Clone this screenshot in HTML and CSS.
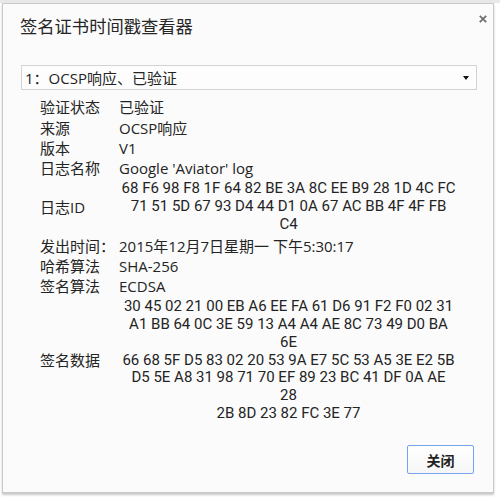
FILE: index.html
```html
<!DOCTYPE html>
<html lang="zh-CN">
<head>
<meta charset="utf-8">
<title>签名证书时间戳查看器</title>
<link rel="stylesheet" href="styles.css">
</head>
<body>
<div class="dialog">
  <div class="titlebar">
    <h1 class="title">签名证书时间戳查看器</h1>
    <span class="close" aria-label="关闭">
      <svg width="8" height="8" viewBox="0 0 8 8"><path d="M0.8 0.8 L7.2 7.2 M7.2 0.8 L0.8 7.2" stroke="#6f6f6f" stroke-width="1.8" fill="none"/></svg>
    </span>
  </div>
  <div class="select">
    <span class="select-text">1<span class="colon">：</span>OCSP响应、已验证</span>
    <span class="arrow"></span>
  </div>
  <div class="details">
    <div class="label">验证状态</div><div class="value">已验证</div>
    <div class="label">来源</div><div class="value">OCSP响应</div>
    <div class="label">版本</div><div class="value">V1</div>
    <div class="label">日志名称</div><div class="value">Google 'Aviator' log</div>
    <div class="label mid">日志ID</div>
    <div class="value hex">
      <div>68 F6 98 F8 1F 64 82 BE 3A 8C EE B9 28 1D 4C FC</div>
      <div>71 51 5D 67 93 D4 44 D1 0A 67 AC BB 4F 4F FB</div>
      <div>C4</div>
    </div>
    <div class="label">发出时间<span class="colon">：</span></div><div class="value">2015年12月7日星期一 下午5:30:17</div>
    <div class="label">哈希算法</div><div class="value">SHA-256</div>
    <div class="label">签名算法</div><div class="value">ECDSA</div>
    <div class="label"></div>
    <div class="value hex sighex">
      <div>30 45 02 21 00 EB A6 EE FA 61 D6 91 F2 F0 02 31</div>
      <div>A1 BB 64 0C 3E 59 13 A4 A4 AE 8C 73 49 D0 BA</div>
      <div>6E</div>
    </div>
    <div class="label top">签名数据</div>
    <div class="value hex sigdata">
      <div>66 68 5F D5 83 02 20 53 9A E7 5C 53 A5 3E E2 5B</div>
      <div>D5 5E A8 31 98 71 70 EF 89 23 BC 41 DF 0A AE</div>
      <div>28</div>
      <div>2B 8D 23 82 FC 3E 77</div>
    </div>
  </div>
  <div class="footer">
    <button class="btn">关闭</button>
  </div>
</div>
</body>
</html>
```
FILE: styles.css
```css
html, body {
  margin: 0;
  padding: 0;
}
body {
  background: linear-gradient(#e8e8e8, #e8e8e8) top left / 100% 3px no-repeat, #ffffff;
  padding: 3px 0 0 2px;
  font-family: "Open Sans", "Noto Sans CJK SC", sans-serif;
  font-size: 15px;
  color: #242424;
  width: 500px;
  height: 499px;
  box-sizing: border-box;
}
.dialog {
  width: 492px;
  height: 490px;
  box-sizing: border-box;
  border: 1px solid #c9c9c9;
  background: #fbfbfb;
  box-shadow: 0 2px 2px rgba(0, 0, 0, 0.22);
  display: flex;
  flex-direction: column;
}
.titlebar {
  display: flex;
  justify-content: space-between;
  align-items: flex-start;
}
.title {
  margin: 10px 0 0 17px;
  font-size: 17.3px;
  line-height: 24px;
  font-weight: normal;
  color: #262626;
  font-family: "Noto Sans CJK SC", sans-serif;
}
.close {
  display: block;
  width: 8px;
  height: 8px;
  margin: 11px 6px 0 0;
}
.close svg {
  display: block;
}
.select {
  margin: 27px 0 0 18px;
  width: 456px;
  height: 25px;
  box-sizing: border-box;
  border: 1px solid #d3d3d3;
  background: #fdfdfd;
  display: flex;
  align-items: center;
  justify-content: space-between;
  padding: 0 7px 0 3px;
}
.select-text {
  line-height: 22px;
}
.colon {
  font-family: "Noto Sans CJK TC", "Noto Sans CJK SC", sans-serif;
}
.arrow {
  width: 0;
  height: 0;
  border-left: 3.5px solid transparent;
  border-right: 3.5px solid transparent;
  border-top: 4px solid #111;
}
.details {
  margin-top: 7.4px;
  padding-left: 37px;
  display: grid;
  grid-template-columns: 79px 339px;
}
.label, .value {
  padding: 1px 0;
  line-height: 18.2px;
  white-space: nowrap;
}
.label.mid {
  align-self: center;
}
.label.top {
  align-self: start;
  padding: 0;
  line-height: 17.8px;
}
.value.hex {
  text-align: center;
  font-family: Roboto, "Open Sans", sans-serif;
  font-size: 15px;
  line-height: 17.8px;
  padding: 2px 0;
}
.value.sighex {
  padding: 2px 0 0;
}
.value.sigdata {
  padding: 0;
}
.footer {
  margin-top: auto;
  display: flex;
  justify-content: flex-end;
  padding: 0 19px 18px 0;
}
.btn {
  width: 67px;
  height: 29px;
  box-sizing: border-box;
  border: 1px solid #76a3ee;
  border-radius: 2px;
  background: linear-gradient(#ffffff, #f6f6f6);
  font-family: "Noto Sans CJK SC", sans-serif;
  font-size: 14px;
  font-weight: bold;
  color: #222;
  padding: 0;
}
```
